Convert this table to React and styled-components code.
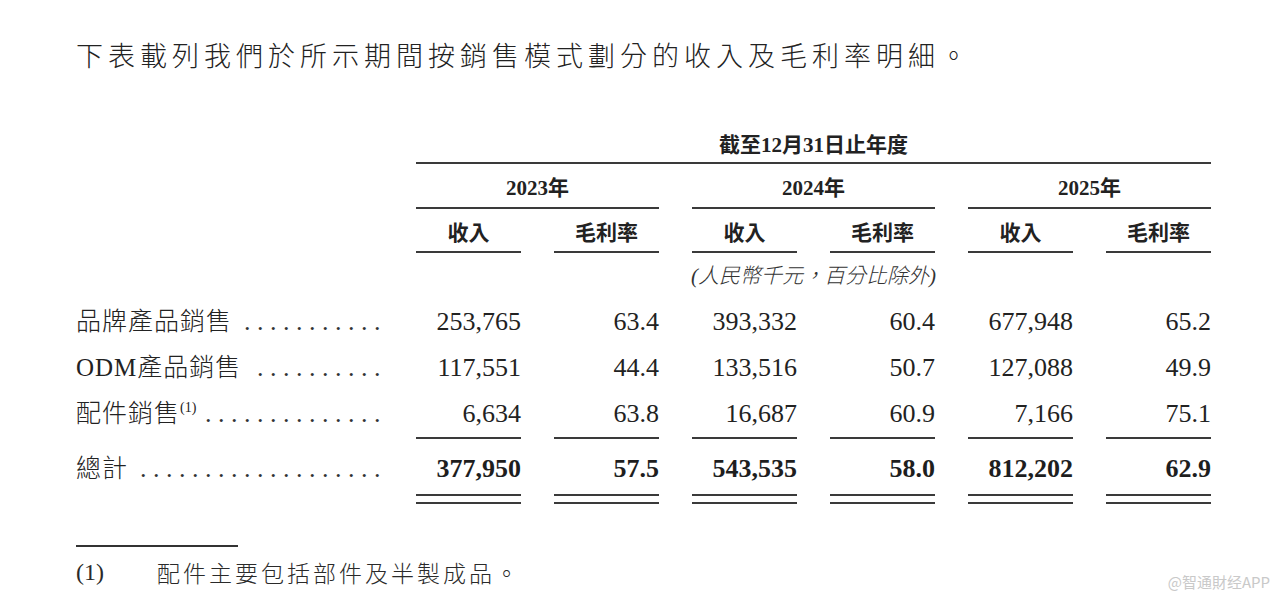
import React from "react";
import styled, { createGlobalStyle } from "styled-components";

const Global = createGlobalStyle`
  html, body { margin: 0; padding: 0; background: #ffffff; }
  body {
    font-family: "Liberation Serif", "Noto Sans CJK TC", serif;
    color: #262626;
  }
`;

const CJK = `"Liberation Serif", "Noto Sans CJK TC", serif`;

const Page = styled.div`
  position: relative;
  width: 1280px;
  height: 602px;
  overflow: hidden;
  box-sizing: border-box;
  padding: 39px 0 0 76px;
`;

const Title = styled.p`
  margin: 0;
  font-family: "Noto Sans CJK TC", sans-serif;
  font-weight: 300;
  font-size: 27px;
  line-height: 32px;
  letter-spacing: 5px;
  color: #222;
`;

const Table = styled.div`
  margin-top: 61px;
`;

const Row = styled.div`
  display: grid;
  grid-template-columns: 307px repeat(6, 105px);
  column-gap: 33px;
  align-items: ${(p) => p.$align || "end"};
  padding-top: ${(p) => p.$pt || 0}px;
`;

const HeadCell = styled.div`
  grid-column: ${(p) => p.$start} / span ${(p) => p.$span};
  text-align: center;
  font-family: ${CJK};
  font-weight: 700;
  font-size: 21px;
  line-height: 26px;
  padding-bottom: ${(p) => p.$pb}px;
  border-bottom: 2px solid #3a3a3a;
  color: #222;
`;

const UnitCell = styled.div`
  grid-column: 2 / span 6;
  text-align: center;
  font-family: ${CJK};
  font-weight: 300;
  font-style: italic;
  font-size: 21px;
  line-height: 26px;
  color: #333;
`;

const Body = styled.div`
  margin-top: 10px;
`;

const LabelCell = styled.div`
  display: flex;
  justify-content: space-between;
  align-items: baseline;
  font-family: ${CJK};
  font-weight: 300;
  font-size: 25px;
  letter-spacing: 1px;
  line-height: ${(p) => (p.$total ? 26 : 46)}px;
  padding-top: ${(p) => (p.$total ? 17 : 0)}px;
  color: #222;
  white-space: nowrap;
`;

const Sup = styled.sup`
  font-family: "Liberation Serif", serif;
  font-size: 14px;
  line-height: 0;
  letter-spacing: 0;
  vertical-align: 10px;
`;

const Leader = styled.span`
  white-space: nowrap;
  font-family: "Liberation Serif", serif;
  font-size: 26px;
  letter-spacing: 6.5px;
  margin-right: -4px;
  color: #333;
`;

const Value = styled.div`
  text-align: right;
  font-size: 26px;
  line-height: 46px;
  color: #222;
  border-bottom: ${(p) => (p.$rule ? "2px solid #3a3a3a" : "none")};
`;

const TotalOuter = styled.div`
  padding-bottom: 6px;
  border-bottom: 2px solid #3a3a3a;
`;

const TotalInner = styled.div`
  text-align: right;
  font-weight: 700;
  font-size: 26px;
  line-height: 26px;
  padding-top: 17px;
  padding-bottom: 12px;
  border-bottom: 2px solid #3a3a3a;
  color: #1e1e1e;
`;

const FootRule = styled.div`
  width: 162px;
  height: 2px;
  margin-top: 41px;
  background: #333;
`;

const FootNote = styled.div`
  display: flex;
  margin-top: 10px;
  line-height: 30px;
`;

const FootMark = styled.span`
  width: 81px;
  flex: none;
  font-family: "Liberation Serif", serif;
  font-size: 24px;
  color: #2a2a2a;
`;

const FootText = styled.span`
  font-family: "Noto Sans CJK TC", sans-serif;
  font-weight: 300;
  font-size: 23px;
  letter-spacing: 3px;
  color: #2a2a2a;
`;

const Watermark = styled.div`
  position: absolute;
  right: 10px;
  top: 572px;
  font-family: "Noto Sans CJK SC", "Noto Sans", sans-serif;
  font-size: 15px;
  line-height: 20px;
  color: #c9c9c9;
`;

const rows = [
  { label: "品牌產品銷售", dots: 11, vals: ["253,765", "63.4", "393,332", "60.4", "677,948", "65.2"] },
  { label: "ODM產品銷售", dots: 10, vals: ["117,551", "44.4", "133,516", "50.7", "127,088", "49.9"] },
  { label: "配件銷售", sup: "(1)", dots: 14, vals: ["6,634", "63.8", "16,687", "60.9", "7,166", "75.1"], rule: true },
];

const totals = ["377,950", "57.5", "543,535", "58.0", "812,202", "62.9"];

export default function App() {
  return (
    <>
      <Global />
      <Page>
        <Title>下表載列我們於所示期間按銷售模式劃分的收入及毛利率明細。</Title>
        <Table>
          <Row>
            <HeadCell $start={2} $span={6} $pb={4}>截至12月31日止年度</HeadCell>
          </Row>
          <Row $pt={11}>
            <HeadCell $start={2} $span={2} $pb={6}>2023年</HeadCell>
            <HeadCell $start={4} $span={2} $pb={6}>2024年</HeadCell>
            <HeadCell $start={6} $span={2} $pb={6}>2025年</HeadCell>
          </Row>
          <Row $pt={11}>
            {[2, 3, 4, 5, 6, 7].map((c) => (
              <HeadCell key={c} $start={c} $span={1} $pb={5}>
                {c % 2 === 0 ? "收入" : "毛利率"}
              </HeadCell>
            ))}
          </Row>
          <Row $pt={10}>
            <UnitCell>(人民幣千元，百分比除外)</UnitCell>
          </Row>
          <Body>
            {rows.map((r) => (
              <Row key={r.label} $align="start">
                <LabelCell>
                  <span>
                    {r.label}
                    {r.sup && <Sup>{r.sup}</Sup>}
                  </span>
                  <Leader>{".".repeat(r.dots)}</Leader>
                </LabelCell>
                {r.vals.map((v, i) => (
                  <Value key={i} $rule={r.rule}>{v}</Value>
                ))}
              </Row>
            ))}
            <Row $align="start">
              <LabelCell $total>
                <span>總計</span>
                <Leader>{".".repeat(19)}</Leader>
              </LabelCell>
              {totals.map((v, i) => (
                <TotalOuter key={i}>
                  <TotalInner>{v}</TotalInner>
                </TotalOuter>
              ))}
            </Row>
          </Body>
        </Table>
        <FootRule />
        <FootNote>
          <FootMark>(1)</FootMark>
          <FootText>配件主要包括部件及半製成品。</FootText>
        </FootNote>
        <Watermark>@智通財经APP</Watermark>
      </Page>
    </>
  );
}
